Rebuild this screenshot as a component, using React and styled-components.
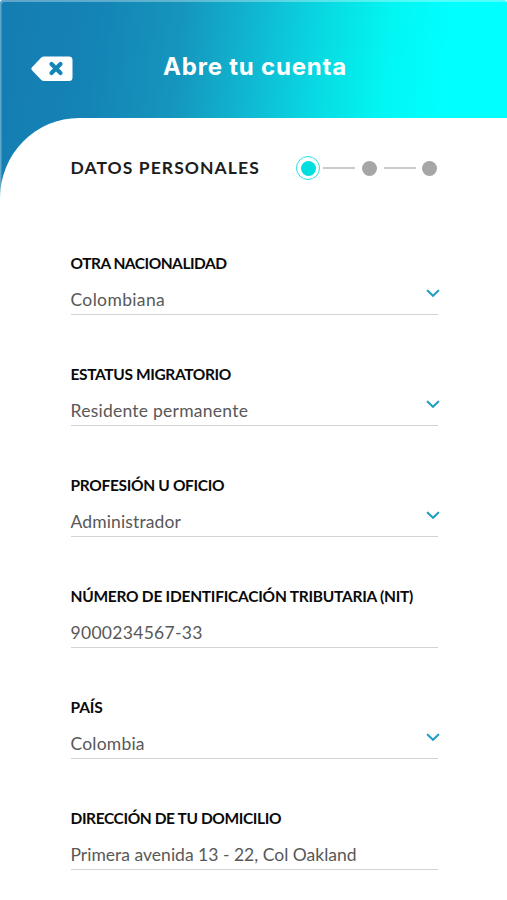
import React from "react";
import styled, { createGlobalStyle } from "styled-components";

const GlobalStyle = createGlobalStyle`
  * {
    box-sizing: border-box;
  }
  body {
    margin: 0;
    background: #fff;
    font-family: Lato, "Liberation Sans", sans-serif;
  }
`;

const Screen = styled.div`
  width: 507px;
  height: 900px;
  overflow: hidden;
  background: #fff;
`;
const Backdrop = styled.div`
  padding-top: 2px;
  border-radius: 3px 3px 0 0;
  background: linear-gradient(
    97deg,
    #147db2 0,
    #1483b5 95px,
    #1596bd 185px,
    #0fbad3 262px,
    #07dde4 332px,
    #02f6f3 392px,
    #00ffff 450px
  );
  box-shadow: inset 1.5px 2px 0 rgba(255, 255, 255, 0.32);
`;
const Header = styled.header`
  height: 116px;
  display: flex;
  align-items: center;
  padding: 17px 0 0 31px;
`;
const BackButton = styled.button`
  display: flex;
  padding: 0;
  border: 0;
  background: none;
`;
const Title = styled.h1`
  margin: 0 0 3px 90px;
  color: #fff;
  font-family: Inter, sans-serif;
  font-size: 24px;
  font-weight: 700;
  line-height: 30px;
  letter-spacing: 0.8px;
  white-space: nowrap;
`;
const Panel = styled.main`
  height: 782px;
  padding: 37px 70px 0 70.5px;
  background: #fff;
  border-top-left-radius: 79px 80px;
`;
const StepRow = styled.div`
  height: 26px;
  display: flex;
  align-items: center;
`;
const SectionTitle = styled.h2`
  width: 226.5px;
  margin: 0;
  color: #1c1c1c;
  font-size: 17.5px;
  font-weight: 700;
  line-height: 24px;
  letter-spacing: 1.07px;
  white-space: nowrap;
`;
const Steps = styled.div`
  display: flex;
  align-items: center;
`;
const ActiveStep = styled.div`
  width: 24px;
  height: 24px;
  padding: 3.5px;
  border: 1.3px solid #28dfe0;
  border-radius: 50%;

  &::before {
    content: "";
    display: block;
    height: 100%;
    border-radius: 50%;
    background: #00dfe0;
  }
`;
const Step = styled.div`
  width: 15px;
  height: 15px;
  border-radius: 50%;
  background: #a6a6a6;
`;
const StepLine = styled.div`
  width: 32px;
  height: 2px;
  margin: 0 ${({ $after }) => $after}px 0 ${({ $before }) => $before}px;
  background: #cbcbcb;
`;
const Form = styled.div`
  width: 367px;
  padding-top: 71px;
`;
const Field = styled.div`
  height: 111px;
`;
const Label = styled.div`
  color: #0a0a0a;
  font-size: 15.5px;
  font-weight: 700;
  line-height: 22px;
  letter-spacing: ${({ $spacing }) => $spacing}px;
  white-space: nowrap;
`;
const Value = styled.div`
  height: 41px;
  display: flex;
  justify-content: space-between;
  padding-top: 15px;
  border-bottom: 1px solid #d3d3d3;
  color: #585858;
  font-size: 17.5px;
  line-height: 22px;
  letter-spacing: ${({ $spacing }) => $spacing}px;
  white-space: nowrap;
`;
const Chevron = styled.svg`
  width: 14px;
  height: 9px;
  flex: none;
  margin: 0 -2px 0 0;
`;

const fields = [
  { label: "OTRA NACIONALIDAD", value: "Colombiana", select: true, ls: -0.5, vs: 0.35 },
  { label: "ESTATUS MIGRATORIO", value: "Residente permanente", select: true, ls: -0.37, vs: 0.25 },
  { label: "PROFESIÓN U OFICIO", value: "Administrador", select: true, ls: -0.32, vs: 0.13 },
  { label: "NÚMERO DE IDENTIFICACIÓN TRIBUTARIA (NIT)", value: "9000234567-33", ls: -0.25, vs: 0.3 },
  { label: "PAÍS", value: "Colombia", select: true, ls: -0.15, vs: 0.2 },
  { label: "DIRECCIÓN DE TU DOMICILIO", value: "Primera avenida 13 - 22, Col Oakland", ls: -0.39, vs: 0.01 },
];

const BackIcon = () => (
  <svg width="42" height="26" viewBox="0 0 42 26">
    <path
      d="M13 .5H38a3.500 3.500 0 0 1 3.500 3.500V21.500a3.500 3.500 0 0 1-3.500 3.500H13Q11.500 25 10.300 23.900L1 14.300Q-.3 12.800 1 11.300L10.300 1.600Q11.500.5 13 .5Z"
      fill="#fff"
    />
    <path d="M20.500 8 29.500 17M29.500 8 20.500 17" stroke="#1485b5" strokeWidth="4.200" strokeLinecap="round" />
  </svg>
);

const App = () => {
  return (
    <>
      <GlobalStyle />
      <Screen>
        <Backdrop>
          <Header>
            <BackButton>
              <BackIcon />
            </BackButton>
            <Title>Abre tu cuenta</Title>
          </Header>

          <Panel>
            <StepRow>
              <SectionTitle>DATOS PERSONALES</SectionTitle>
              <Steps>
                <ActiveStep />
                <StepLine $before={3} $after={7} />
                <Step />
                <StepLine $before={7} $after={6} />
                <Step />
              </Steps>
            </StepRow>

            <Form>
              {fields.map(({ label, value, select, ls, vs }) => (
                <Field key={label}>
                  <Label $spacing={ls}>{label}</Label>
                  <Value $spacing={vs}>
                    {value}
                    {select && (
                      <Chevron viewBox="0 0 14 9">
                        <path d="M1.700 1.700 7 6.700 12.300 1.700" fill="none" stroke="#239fc4" strokeWidth="2.100" strokeLinecap="round" />
                      </Chevron>
                    )}
                  </Value>
                </Field>
              ))}
            </Form>
          </Panel>
        </Backdrop>
      </Screen>
    </>
  );
};

export default App;
